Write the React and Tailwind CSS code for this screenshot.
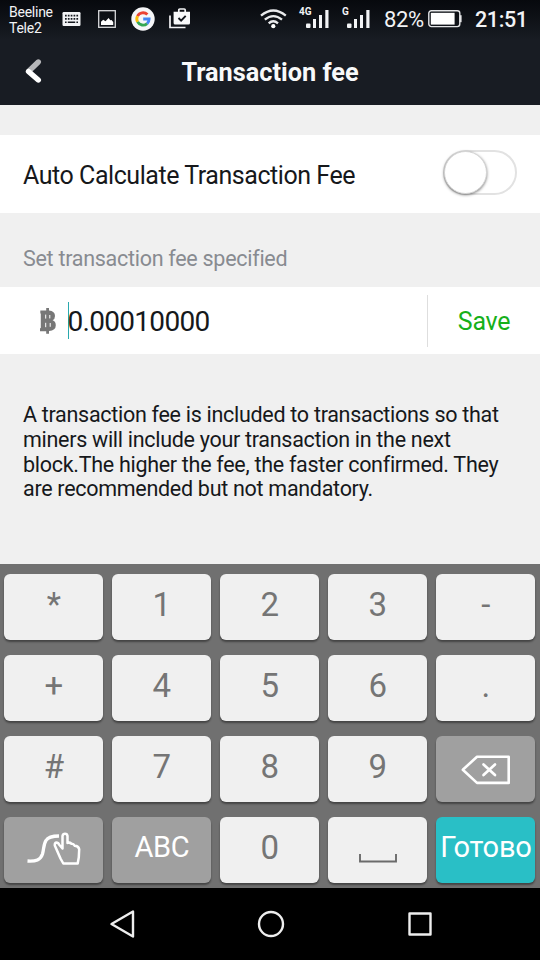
import React, { useState } from "react";

const KEYS = [
  "*", "1", "2", "3", "-",
  "+", "4", "5", "6", ".",
  "#", "7", "8", "9", "delete",
  "swipe", "ABC", "0", "space", "Готово",
];

const Signal = ({ label, labelClass }) => (
  <div className="relative h-[19px] w-[23px]">
    <span className={`absolute -top-[4px] text-[10px] leading-[12px] font-bold ${labelClass}`}>
      {label}
    </span>
    <svg className="block" width="23" height="19" viewBox="0 0 23 19" fill="#f2f3f5">
      <rect x="0" y="13.5" width="4.5" height="4.5" rx="1" />
      <rect x="7" y="9" width="3" height="9" />
      <rect x="13" y="5" width="3" height="13" />
      <rect x="19.3" y="0" width="3.2" height="18" />
    </svg>
  </div>
);

const StatusBar = () => (
  <div className="flex h-10 items-start text-[#f2f3f5]">
    <div className="ml-[9px] mt-[5px] w-[53px] text-[14px] leading-[15.5px] tracking-[-0.25px]">
      <div>Beeline</div>
      <div>Tele2</div>
    </div>
    {/* keyboard */}
    <svg className="mt-3 shrink-0" width="19" height="14" viewBox="0 0 19 14">
      <rect x="0.5" y="0" width="18" height="14" rx="1.2" fill="#f2f3f5" />
      <g fill="none" stroke="#15191f">
        <path d="M3 3.6h13.2M3 6.8h13.2" strokeWidth="1.7" strokeDasharray="1.7 1.15" />
        <path d="M3 10.3h1.6M5.8 10.3h7.4M14.4 10.3h1.6" strokeWidth="1.5" />
      </g>
    </svg>
    {/* picture */}
    <svg className="ml-[17px] mt-[10px] shrink-0" width="18" height="18" viewBox="0 0 18 18">
      <rect x="0.7" y="0.7" width="16.6" height="16.6" fill="none" stroke="#dadbdd" strokeWidth="1.3" />
      <path d="M3 15v-3.2l2.2-2.1 2.3 1.5L10.6 8l1.7 2.2 1.2-.3 1.7 2.2V15z" fill="#fff" />
    </svg>
    {/* google */}
    <svg className="ml-[15px] mt-[7px] shrink-0" width="24" height="24" viewBox="0 0 24 24">
      <circle cx="12" cy="12" r="11.7" fill="#f5f6f8" />
      <g fill="none" strokeWidth="2.9">
        <path d="M6.5 9.1A6.2 6.2 0 0 1 16.4 7.6" stroke="#ea4335" />
        <path d="M6.6 14.9A6.2 6.2 0 0 1 6.5 9.1" stroke="#fbbc05" />
        <path d="M16.1 16.6A6.2 6.2 0 0 1 6.6 14.9" stroke="#34a853" />
        <path d="M12.2 12H18.1A6.2 6.2 0 0 1 16.1 16.6" stroke="#4285f4" />
      </g>
    </svg>
    {/* store bag */}
    <svg className="ml-[14px] mt-[8px] shrink-0" width="22" height="21" viewBox="0 0 22 21" fill="none">
      <path d="M1 7.5V19.5H16.5" stroke="#f2f3f5" strokeWidth="1.7" />
      <path d="M9.8 4V2q0-1 1-1h4.4q1 0 1 1v2" stroke="#f2f3f5" strokeWidth="1.7" />
      <path d="M4.6 3.8H21V15q0 1.5-1.5 1.5H6.1Q4.6 16.5 4.6 15z" fill="#f8f9fa" />
      <path d="M9.5 10l2.6 2.6 4.6-4.8" stroke="#12161c" strokeWidth="1.9" />
    </svg>
    {/* wifi */}
    <svg className="ml-[69px] mt-[9px] shrink-0" width="27" height="20" viewBox="0 0 27 20" fill="none" stroke="#e9eaec" strokeWidth="2.3">
      <path d="M1 6.7Q13.3-3.7 25.8 6.7" />
      <path d="M4.8 10.7Q13.3 3.5 22 10.7" />
      <path d="M8.7 14.4Q13.3 10.2 18 14.4" />
      <circle cx="13.3" cy="17.2" r="2.1" fill="#fff" stroke="none" />
    </svg>
    <div className="ml-[19px] mt-[10px]">
      <Signal label="4G" labelClass="-left-[7px]" />
    </div>
    <div className="ml-[18px] mt-[10px]">
      <Signal label="G" labelClass="-left-[5px]" />
    </div>
    <span className="ml-[14px] mt-[8px] w-[43px] text-[22px] leading-6 tracking-[-0.4px]">82%</span>
    <svg className="mt-[10px] ml-px shrink-0" width="35" height="18" viewBox="0 0 35 18" fill="none">
      <rect x="0.8" y="0.8" width="31" height="15.8" rx="2.5" stroke="#e4e5e7" strokeWidth="1.4" />
      <rect x="2.8" y="2.8" width="23.8" height="11.8" fill="#fff" />
      <path d="M32.6 5.2v7" stroke="#e4e5e7" strokeWidth="2" />
    </svg>
    <span className="ml-[12px] mt-[8px] text-[21.5px] leading-6 font-medium tracking-[-0.4px]">21:51</span>
  </div>
);

const DeleteIcon = () => (
  <svg className="mt-px" width="50" height="30" viewBox="0 0 50 30" fill="none" stroke="#fff">
    <path d="M16 1.7H47.7V27.9H16L1.8 14.8z" strokeWidth="2.6" strokeLinejoin="round" />
    <path d="M22.5 9.5l11.5 10.5M34 9.5L22.5 20" strokeWidth="2.7" strokeLinecap="round" />
  </svg>
);

const SwipeIcon = () => (
  <svg className="-mt-[2px]" width="54" height="34" viewBox="0 0 54 34" fill="none" stroke="#fff">
    <path d="M.5 29C9 29.5 13.5 28 15.5 22C17 17 16.5 12 19 8.5C21.5 4.5 26 4 32 4" strokeWidth="3.3" />
    <path
      d="M36.3 31.5L33.5 26.5L27.8 13.5Q27.5 11 29.3 10.5Q31.3 10.5 32 12.5L35.5 16.5V4Q36 1.7 38 1.7Q40.2 1.7 40.5 4V11Q42.5 10 44.5 11.7Q46.5 11.5 47.8 13.8Q51.5 14 52.2 17.3L51.8 25.3L50.7 31.5z"
      strokeWidth="2.5"
      strokeLinejoin="round"
    />
  </svg>
);

const renderKey = (key) => {
  switch (key) {
    case "delete":
      return <DeleteIcon />;
    case "swipe":
      return <SwipeIcon />;
    case "space":
      return (
        <svg className="mt-[17px]" width="38" height="9" viewBox="0 0 38 9" fill="none">
          <path d="M1 0V7.5H37V0" stroke="#6b6b6b" strokeWidth="1.9" />
        </svg>
      );
    case "ABC":
      return <span className="mb-[6px] text-[29px] leading-9 tracking-[-0.4px]">ABC</span>;
    case "Готово":
      return <span className="mb-[6px] text-[29px] leading-9 tracking-[-0.2px]">Готово</span>;
    default:
      return <span className="mb-[5px] text-[33px] leading-9">{key}</span>;
  }
};

const keyColor = (key) => {
  if (key === "Готово") return "bg-[#29bfc6] text-white";
  if (key === "delete" || key === "swipe" || key === "ABC") return "bg-[#a0a0a0] text-white";
  return "bg-[#f0f0f0] text-[#757575]";
};

const App = () => {
  const [auto, setAuto] = useState(false);

  return (
    <div className="flex h-[960px] w-[540px] flex-col overflow-hidden bg-[#f0f0f0] font-['Roboto',sans-serif] text-[#16181b]">
      {/* Header */}
      <header className="h-[105px] shrink-0 bg-[#181c23]">
        <div className="bg-linear-to-b from-[#07090d] to-[#181c23]">
          <StatusBar />
        </div>
        <div className="flex h-[65px] items-center">
          <svg className="ml-[25px] -mt-[3px]" width="18" height="26" viewBox="0 0 18 26" fill="none" strokeWidth="5.4" strokeLinecap="round">
            <path d="M13.3 4L4 13" stroke="#b5b6b9" />
            <path d="M3.5 13.5L13.3 22" stroke="#fff" />
          </svg>
          <h1 className="flex-1 pr-[43px] text-center text-[25.3px] leading-8 font-bold text-[#f8f9fa]">
            Transaction fee
          </h1>
        </div>
      </header>

      {/* Auto calculate */}
      <div className="mt-[30px] flex h-[78px] shrink-0 items-center justify-between bg-white pl-[23px] pr-[23px]">
        <span className="pt-[3px] text-[25px] tracking-[-0.45px]">Auto Calculate Transaction Fee</span>
        <button
          onClick={() => setAuto(!auto)}
          className={`-mt-[3px] flex h-[45px] w-[74px] items-center rounded-full border-2 border-[#e2e2e2] ${auto ? "justify-end" : ""}`}
        >
          <span className="-ml-px size-[43px] rounded-full border border-[#d5d5d5] bg-white shadow-[0_1px_3px_rgba(0,0,0,0.5)]"></span>
        </button>
      </div>

      <div className="flex h-[74px] shrink-0 items-center pl-[23px] pt-[18px] text-[21.5px] tracking-[-0.28px] text-[#888b91]">
        Set transaction fee specified
      </div>

      {/* Fee amount */}
      <div className="flex h-[67px] shrink-0 items-center bg-white">
        <svg className="ml-[39px] mt-px shrink-0" width="18" height="28" viewBox="0 0 18 28">
          <path
            d="M1.3 3.5H7.2V1H10V3.6Q16 4.2 16 9Q16 12.2 13.6 13.3Q16.8 14.5 16.8 18.3Q16.8 23.5 10 24.1V26.8H7.2V24.3H1V21.5L1.8 20.8V6.8L1.3 6.2z"
            fill="#777"
          />
          <path d="M6.7 7.6V11.6M6.7 15.8V20.2M10.8 8V11.4M11.2 16V19.8" stroke="#fff" strokeWidth="1" />
        </svg>
        <div className="ml-[10.5px] h-[37px] w-[1.5px] bg-[#2aa9ae]"></div>
        <span className="-ml-[1.5px] flex-1 pt-[2px] text-[28px] leading-9 tracking-[-0.7px]">0.00010000</span>
        <div className="h-[52px] w-px bg-[#dedede]"></div>
        <button className="w-[112px] pt-[3px] text-center text-[25px] tracking-[-0.3px] text-[#16b01a]">Save</button>
      </div>

      <p className="mt-[49px] h-[161px] shrink-0 pl-[23px] text-[21.5px] leading-[24.8px] tracking-[-0.29px] whitespace-nowrap">
        A transaction fee is included to transactions so that
        <br />
        miners will include your transaction in the next
        <br />
        block.The higher the fee, the faster confirmed. They
        <br />
        are recommended but not mandatory.
      </p>

      {/* Keyboard */}
      <div className="grid h-[324px] shrink-0 grid-cols-5 content-start gap-x-[9px] gap-y-[15px] bg-[#707070] pl-[4.4px] pr-[4.6px] pt-[10px]">
        {KEYS.map((key) => (
          <button
            key={key}
            className={`flex h-[66px] min-w-0 items-center justify-center rounded-[6px] shadow-[0_2px_2px_rgba(0,0,0,0.4)] ${keyColor(key)}`}
          >
            {renderKey(key)}
          </button>
        ))}
      </div>

      {/* Navigation */}
      <nav className="flex h-[72px] shrink-0 items-center bg-black">
        <svg className="ml-[109px]" width="27" height="30" viewBox="0 0 27 30" fill="none">
          <path d="M24 2.5V27.5L2.5 15z" stroke="#eee" strokeWidth="2.4" strokeLinejoin="round" />
        </svg>
        <svg className="ml-[121px]" width="28" height="28" viewBox="0 0 28 28" fill="none">
          <circle cx="14" cy="14" r="12" stroke="#eee" strokeWidth="2.4" />
        </svg>
        <svg className="ml-[122px]" width="26" height="26" viewBox="0 0 26 26" fill="none">
          <rect x="2.5" y="2.5" width="21" height="21" stroke="#eee" strokeWidth="2.4" strokeLinejoin="round" />
        </svg>
      </nav>
    </div>
  );
};

export default App;
